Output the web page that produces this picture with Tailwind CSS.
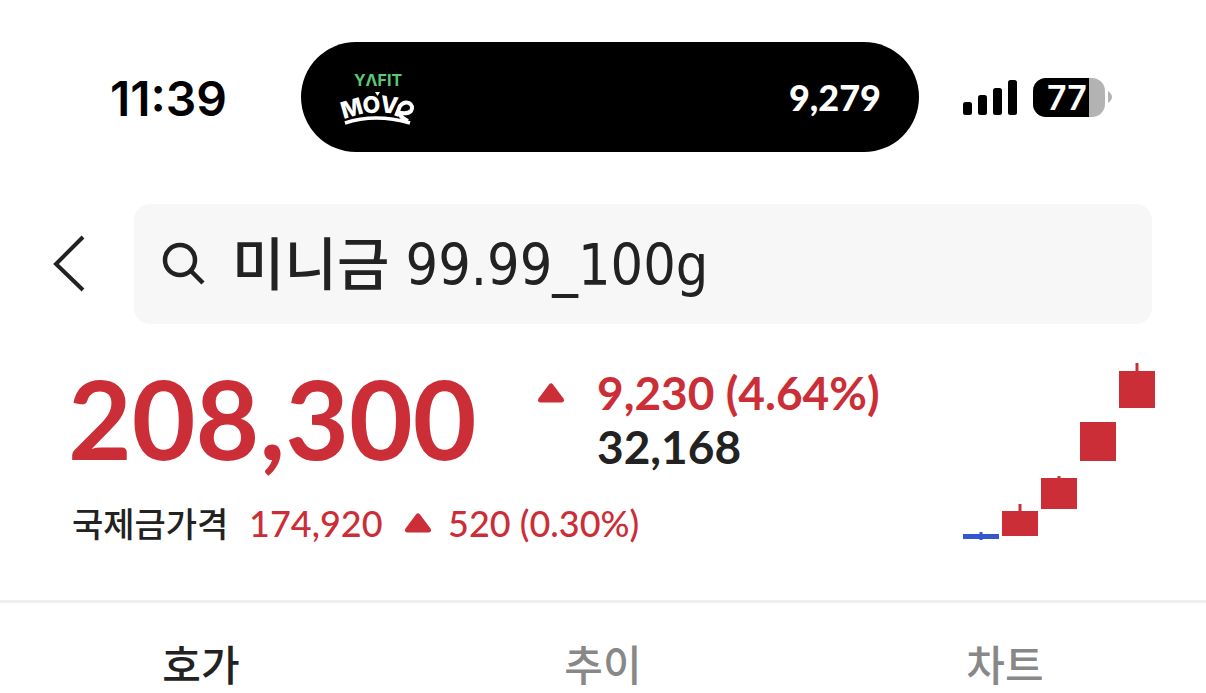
<!DOCTYPE html>
<html lang="ko">
<head>
<meta charset="utf-8">
<meta name="viewport" content="width=device-width, initial-scale=1">
<title>미니금 99.99_100g</title>
<script src="https://cdn.jsdelivr.net/npm/@tailwindcss/browser@4"></script>
</head>
<body class="bg-white text-[#222222] font-['Noto_Sans_CJK_KR',sans-serif]">
<div class="flex flex-col">
  <!-- Status bar -->
  <header class="grid grid-cols-[301px_1fr_287px] items-center pt-[42px] text-black">
    <time class="pt-1 pl-9 text-center font-['Inter'] text-[48px] leading-[56px] font-semibold">11:39</time>
    <div class="flex h-[110px] items-center justify-between rounded-[55px] bg-black pr-[38px] pl-9 text-white">
      <svg class="h-14 w-20" viewBox="0 0 80 56" role="img" aria-label="YAFIT MOVE">
        <text x="41" y="17" text-anchor="middle" font-family="Inter" font-size="16" font-weight="700" fill="#5bc878">YΛFIT</text>
        <g fill="#fff" font-family="Inter" font-weight="800" text-anchor="middle">
          <text font-size="23" transform="translate(17 47) rotate(-16)">M</text>
          <text font-size="23" transform="translate(35 44) rotate(-5)">O</text>
          <text font-size="23" transform="translate(51 44) rotate(8)">V</text>
        </g>
        <path d="M38 23h5l-2.500 4z" fill="#fff"/>
        <path d="M59 47L63 37Q67 32 72 34Q77 37 74 42Q70 46 60 43M61 43Q64 49 71 52" fill="none" stroke="#fff" stroke-width="4"/>
        <path d="M8 54Q38 44 73 54" fill="none" stroke="#fff" stroke-width="3.500"/>
      </svg>
      <span class="font-['Lato'] text-[36px] leading-[44px] font-black">9,279</span>
    </div>
    <div class="flex items-center gap-4 pl-11">
      <svg class="h-9 w-[54px]" viewBox="0 0 54 36" role="img" aria-label="신호 세기">
        <rect x="0" y="23" width="9" height="13" rx="2.500"/><rect x="15" y="16" width="9" height="20" rx="2.500"/><rect x="30" y="9" width="9" height="27" rx="2.500"/><rect x="45" y="1" width="9" height="35" rx="2.500"/>
      </svg>
      <div class="flex items-center gap-[3px]">
        <div class="flex h-[39px] w-[72px] overflow-hidden rounded-[13px] bg-[#b3b3b3]">
          <span class="w-14 bg-black pl-3 text-center font-['Inter'] text-[34px] leading-[39px] font-semibold text-white">77</span>
        </div>
        <svg class="h-3 w-1" viewBox="0 0 4 12" aria-hidden="true"><path d="M0 0Q4 3 4 6T0 12Z" fill="#b3b3b3"/></svg>
      </div>
    </div>
  </header>

  <!-- Search -->
  <div class="flex items-center pt-[52px] pr-[54px] pl-[52px]">
    <button type="button" aria-label="뒤로" class="w-[82px]">
      <svg class="h-[58px] w-9" viewBox="0 0 36 58" fill="none" stroke="#222" stroke-width="4"><path d="M31 2L4 29L31 55"/></svg>
    </button>
    <label class="flex h-[120px] min-w-0 flex-1 items-center gap-[26px] rounded-2xl bg-[#f7f7f7] pl-7">
      <svg class="h-11 w-11 shrink-0" viewBox="0 0 44 44" fill="none" stroke="#222" stroke-width="4.500" aria-hidden="true"><circle cx="18" cy="18" r="15"/><path d="M28.500 28.500L41 41"/></svg>
      <input type="text" aria-label="종목 검색" value="미니금 99.99_100g" class="h-24 min-w-0 flex-1 bg-transparent pb-2 font-['DejaVu_Sans_Condensed','Noto_Sans_CJK_KR',sans-serif] text-[57px] font-medium outline-none">
    </label>
  </div>

  <!-- Price summary -->
  <main class="flex justify-between border-b-[3px] border-[#efefef] pt-[38px] pr-[51px] pb-[52px] pl-[68px] text-[#cc2e37]">
    <div>
      <div class="flex">
        <strong class="w-[469px] font-['Lato'] text-[110px] leading-[110px] font-bold">208,300</strong>
        <svg class="mt-[21px] h-5 w-7" viewBox="0 0 28 20" fill="currentColor" role="img" aria-label="상승"><path d="M12 1.500Q14 -.8 16 1.500L26.500 15.500Q28 19 25 19.500H3Q0 19 1.500 15.500Z"/></svg>
        <div class="pt-1 pl-8 font-['Lato'] text-[46px] leading-[54px] font-bold">
          <p>9,230 (4.64%)</p>
          <p class="text-[#222222]">32,168</p>
        </div>
      </div>
      <div class="flex items-center pt-6 pl-1 text-[34px] leading-[50px]">
        <span class="w-[177px] font-medium text-[#222222]">국제금가격</span>
        <span class="w-[155px] font-['Lato_Medium','Lato'] text-[36px] font-medium">174,920</span>
        <svg class="h-5 w-7" viewBox="0 0 28 20" fill="currentColor" role="img" aria-label="상승"><path d="M12 1.500Q14 -.8 16 1.500L26.500 15.500Q28 19 25 19.500H3Q0 19 1.500 15.500Z"/></svg>
        <span class="pl-4 font-['Lato_Medium','Lato'] text-[36px] font-medium">520 (0.30%)</span>
      </div>
    </div>
    <svg class="h-[178px] w-48" viewBox="0 0 192 178" role="img" aria-label="일봉 차트" fill="#cc2e37">
      <path d="M0 172h36v5H0zM16.500 170h3v8h-3z" fill="#3457cd"/>
      <path d="M39 149h36v25H39zM55.500 142h3v8h-3z"/>
      <path d="M78 116h36v31H78zM94.500 114h3v4h-3z"/>
      <path d="M117 60h36v39h-36z"/>
      <path d="M156 9h36v37h-36zM172.500 1h3v9h-3z"/>
    </svg>
  </main>

  <!-- Tabs -->
  <nav class="grid grid-cols-3 pt-[30px] text-[42px] leading-[60px] font-medium text-[#888888]">
    <button type="button" aria-current="page" class="text-[#222222]">호가</button>
    <button type="button">추이</button>
    <button type="button">차트</button>
  </nav>
</div>
</body>
</html>
